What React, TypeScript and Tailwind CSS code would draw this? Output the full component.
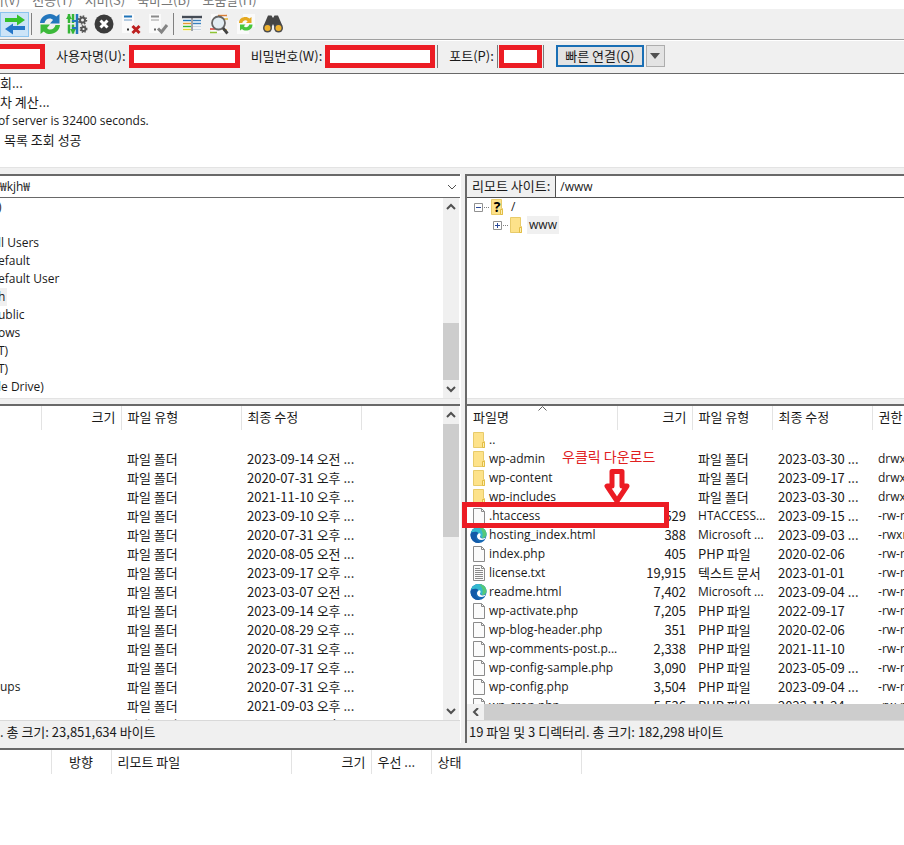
import type { ReactNode } from "react";

type FileKind = "folder" | "file" | "text" | "edge";

// latin only texts are set smaller than the korean ones
const latin = "font-['Open_Sans','Noto_Sans_CJK_KR',sans-serif] text-xs leading-[18px]";

const menus = ["기(V)", "전송(T)", "서버(S)", "북마크(B)", "도움말(H)"];

const localTree = [")", "", "ll Users", "efault", "efault User", "h", "ublic", "ows", "T)", "T)", "le Drive)"];

const localFiles = [
    { name: "", type: "", modified: "" },
    { name: "", type: "파일 폴더", modified: "2023-09-14 오전 ..." },
    { name: "", type: "파일 폴더", modified: "2020-07-31 오후 ..." },
    { name: "", type: "파일 폴더", modified: "2021-11-10 오후 ..." },
    { name: "", type: "파일 폴더", modified: "2023-09-10 오후 ..." },
    { name: "", type: "파일 폴더", modified: "2020-07-31 오후 ..." },
    { name: "", type: "파일 폴더", modified: "2020-08-05 오전 ..." },
    { name: "", type: "파일 폴더", modified: "2023-09-17 오후 ..." },
    { name: "", type: "파일 폴더", modified: "2023-03-07 오전 ..." },
    { name: "", type: "파일 폴더", modified: "2023-09-14 오후 ..." },
    { name: "", type: "파일 폴더", modified: "2020-08-29 오후 ..." },
    { name: "", type: "파일 폴더", modified: "2020-07-31 오후 ..." },
    { name: "", type: "파일 폴더", modified: "2023-09-17 오후 ..." },
    { name: "ups", type: "파일 폴더", modified: "2020-07-31 오후 ..." },
    { name: "", type: "파일 폴더", modified: "2021-09-03 오후 ..." },
    { name: "", type: "파일 폴더", modified: "2020-07-31 오후 ..." },
];

const remoteFiles: { kind: FileKind; name: string; size: string; type: string; modified: string; mode: string }[] = [
    { kind: "folder", name: "..", size: "", type: "", modified: "", mode: "" },
    { kind: "folder", name: "wp-admin", size: "", type: "파일 폴더", modified: "2023-03-30 ...", mode: "drwxr-xr-x" },
    { kind: "folder", name: "wp-content", size: "", type: "파일 폴더", modified: "2023-09-17 ...", mode: "drwxr-xr-x" },
    { kind: "folder", name: "wp-includes", size: "", type: "파일 폴더", modified: "2023-03-30 ...", mode: "drwxr-xr-x" },
    { kind: "file", name: ".htaccess", size: "529", type: "HTACCESS...", modified: "2023-09-15 ...", mode: "-rw-r--r--" },
    { kind: "edge", name: "hosting_index.html", size: "388", type: "Microsoft ...", modified: "2023-09-03 ...", mode: "-rwxr-xr-x" },
    { kind: "file", name: "index.php", size: "405", type: "PHP 파일", modified: "2020-02-06", mode: "-rw-r--r--" },
    { kind: "text", name: "license.txt", size: "19,915", type: "텍스트 문서", modified: "2023-01-01", mode: "-rw-r--r--" },
    { kind: "edge", name: "readme.html", size: "7,402", type: "Microsoft ...", modified: "2023-09-04 ...", mode: "-rw-r--r--" },
    { kind: "file", name: "wp-activate.php", size: "7,205", type: "PHP 파일", modified: "2022-09-17", mode: "-rw-r--r--" },
    { kind: "file", name: "wp-blog-header.php", size: "351", type: "PHP 파일", modified: "2020-02-06", mode: "-rw-r--r--" },
    { kind: "file", name: "wp-comments-post.p...", size: "2,338", type: "PHP 파일", modified: "2021-11-10", mode: "-rw-r--r--" },
    { kind: "file", name: "wp-config-sample.php", size: "3,090", type: "PHP 파일", modified: "2023-05-09 ...", mode: "-rw-r--r--" },
    { kind: "file", name: "wp-config.php", size: "3,504", type: "PHP 파일", modified: "2023-09-04 ...", mode: "-rw-r--r--" },
    { kind: "file", name: "wp-cron.php", size: "5,536", type: "PHP 파일", modified: "2022-11-24 ...", mode: "-rw-r--r--" },
];

function FileIcon({ kind }: { kind: FileKind }) {
    if (kind === "edge") {
        return (
            <svg className="-ml-px h-4 w-[17px] shrink-0" viewBox="0 0 17 16">
                <circle cx="8.500" cy="8" r="8" fill="#1668b4" />
                <path d="M1 5.500C2.200 2.300 5 0 8.500 0c4.500 0 8 3.200 8 7 0 2.600-2 4.200-4.500 4.200L9 8C8 5.500 5 4 1 5.500z" fill="#35b9cf" />
                <path d="M9 0c4.300.2 7.500 3.300 7.500 7 0 2.600-2 4.200-4.500 4.200C13.500 7.500 12.500 3 9 0z" fill="#55c878" />
                <path d="M.6 7C2.500 4.300 6.500 4.200 8.500 6c-1.700.6-2.800 2.200-2.800 4.200 0 2.300 1.500 4.600 4.500 5.600C5 16.800.2 13 .6 7z" fill="#1259a8" />
                <path d="M9.800 6.200c.8.600 1 1.600.5 2.500-.8 1.400.3 2.700 2.400 2.700 1.400 0 2.400-.5 3.200-1.100-.8 1.700-2.200 2.700-4.300 2.700-2.900 0-4.600-1.500-4.600-3.700 0-1.600 1.200-3 2.800-3.100z" fill="#fff" />
            </svg>
        );
    }
    if (kind === "folder") {
        return (
            <svg className="h-4 w-4 shrink-0" viewBox="0 0 16 16">
                <path d="M2.500.5h10v9h1v6h-11z" fill="#fde28a" stroke="#e8cb6a" />
                <path d="M11.500 15.500v-5h2v5z" fill="#fdeeb0" stroke="#e2bd45" />
            </svg>
        );
    }
    return (
        <svg className="h-4 w-4 shrink-0" viewBox="0 0 16 16">
            <path d="M2.500.5h8l3 3v12h-11z" fill="#fbfbfb" stroke="#8b8b8b" />
            <path d="M10.500.5v3h3" fill="none" stroke="#8b8b8b" />
            {kind === "text" && <path d="M4 3.500h5M4 5.500h8M4 7.500h8M4 9.500h8M4 11.500h8M4 13.500h8" stroke="#8a8a8a" />}
        </svg>
    );
}

function Chevron({ dir }: { dir: "up" | "down" | "left" }) {
    const d = { up: "M1 6l4-4 4 4", down: "M1 2l4 4 4-4", left: "M7 0L3 4l4 4" }[dir];
    return (
        <svg className="h-2 w-[10px]" viewBox="0 0 10 8">
            <path d={d} fill="none" stroke="#505050" strokeWidth="2" />
        </svg>
    );
}

// spacer and thumb take their share of the track between the two buttons
function ScrollBar({ before, thumb, after }: { before: string; thumb: string; after: string }) {
    return (
        <div className="flex w-4 shrink-0 flex-col bg-[#f0f0f0]">
            <button aria-label="위로" className="flex h-[18px] items-center justify-center"><Chevron dir="up" /></button>
            <div className={before}></div>
            <div className={`bg-[#cdcdcd] ${thumb}`}></div>
            <div className={after}></div>
            <button aria-label="아래로" className="flex h-[18px] items-center justify-center"><Chevron dir="down" /></button>
        </div>
    );
}

function ToolButton({ label, active, children }: { label: string; active?: boolean; children: ReactNode }) {
    return (
        <button
            aria-label={label}
            className={`flex h-[25px] shrink-0 items-center justify-center ${active ? "w-[29px] border border-[#8cc4ee] bg-[#cce4f7]" : "w-[27px]"}`}
        >
            <svg className="h-[22px] w-[22px] shrink-0" viewBox="0 0 22 22">{children}</svg>
        </button>
    );
}

function Separator() {
    return <div className="mx-[2px] h-[22px] w-px shrink-0 bg-[#808080]"></div>;
}

function Toolbar() {
    return (
        <div className="flex h-[31px] items-center border-b border-[#a0a0a0] bg-[#f0f0f0]">
            <ToolButton label="전송 대기열" active>
                <path d="M1 5h12V1.500L21 7l-8 5.500V9H1z" fill="#35c22c" />
                <path d="M21 13H9v-2.500L1 16l8 5.500V17h12z" fill="#2376c8" />
            </ToolButton>
            <Separator />
            <div className="w-[2px]"></div>
            <ToolButton label="새로고침">
                <path d="M1 10C1.500 4.500 6 1 11 1c2.600 0 4.700 1 6.300 2.600L20.500 1v9.500h-9.500l3-3.500c-1-1-1.800-1.500-3.200-1.500C8 5.500 6 7.300 5.500 10z" fill="#2376bd" />
                <path d="M21 12c-.5 5.500-5 9-10 9-2.600 0-4.700-1-6.300-2.600L1.500 21v-9.500H11L8 15c1 1 1.800 1.500 3.200 1.500 2.800 0 4.800-1.800 5.300-4.500z" fill="#3bb93a" />
            </ToolButton>
            <ToolButton label="대기열 처리">
                <path d="M3 1v20M7 1v20" stroke="#35b537" strokeWidth="2.500" strokeDasharray="9 1.500" />
                <path d="M0 6l3-5 3 5zM4 16l3 5 3-5z" fill="#35b537" />
                <path d="M11 1v20" stroke="#2376bd" strokeWidth="2.500" />
                <path d="M6 8h5M6 15h5" stroke="#2376bd" strokeWidth="2" />
                <circle cx="16.500" cy="7" r="2.500" fill="none" stroke="#555" strokeWidth="2" />
                <circle cx="16.500" cy="7" r="4" fill="none" stroke="#555" strokeWidth="1.500" strokeDasharray="1.600 1.500" />
                <circle cx="17.500" cy="16" r="2" fill="none" stroke="#555" strokeWidth="1.800" />
                <circle cx="17.500" cy="16" r="3.300" fill="none" stroke="#555" strokeWidth="1.300" strokeDasharray="1.400 1.300" />
            </ToolButton>
            <ToolButton label="취소">
                <circle cx="11" cy="11" r="9.500" fill="#3b3b3b" />
                <path d="M7.500 7.500l7 7M14.500 7.500l-7 7" stroke="#fff" strokeWidth="3" />
            </ToolButton>
            <ToolButton label="연결 끊기">
                <path d="M2 1h12v19H2z" fill="#fafafa" />
                <path d="M4 3.500h8" stroke="#1e73b8" strokeWidth="2" />
                <path d="M4 7h8" stroke="#9bbbd8" strokeWidth="1.500" />
                <path d="M7 16.500h2" stroke="#333" strokeWidth="2" />
                <path d="M12.500 13l7 7M19.500 13l-7 7" stroke="#bd2020" strokeWidth="3" />
            </ToolButton>
            <ToolButton label="다시 연결">
                <path d="M2 1h12v19H2z" fill="#fafafa" />
                <path d="M4 3.500h8" stroke="#8a8a8a" strokeWidth="2" />
                <path d="M4 7h8" stroke="#bbb" strokeWidth="1.500" />
                <path d="M7 16.500h2" stroke="#666" strokeWidth="2" />
                <path d="M11 15.500l3.500 3.500 5.500-7" fill="none" stroke="#848484" strokeWidth="3" />
            </ToolButton>
            <Separator />
            <div className="w-[2px]"></div>
            <ToolButton label="필터">
                <path d="M2 2h18v16H2z" fill="#fff" />
                <path d="M1 4h20" stroke="#444b55" strokeWidth="2.500" />
                <path d="M2 7.500h8" stroke="#2376bd" strokeWidth="1.500" />
                <path d="M2 10.500h8" stroke="#e39b33" strokeWidth="1.500" />
                <path d="M2 13.500h8" stroke="#35b537" strokeWidth="1.500" />
                <path d="M2 16.500h8" stroke="#e3d133" strokeWidth="1.500" />
                <path d="M12 7.500h8M12 10.500h8" stroke="#3a80bd" strokeWidth="1.500" />
                <path d="M12 13.500h8M12 16.500h8" stroke="#c9d4df" strokeWidth="1.500" />
                <path d="M11 3v15" stroke="#444b55" />
            </ToolButton>
            <ToolButton label="디렉터리 비교">
                <path d="M3 1h15v19H3z" fill="#fafafa" />
                <path d="M10 2.500h9" stroke="#d8803a" strokeWidth="1.500" />
                <path d="M16 6h4M15 17h4" stroke="#e3b533" strokeWidth="1.500" />
                <path d="M2 16h5" stroke="#d83a2e" strokeWidth="1.500" />
                <path d="M2 19.500h7" stroke="#8fc435" strokeWidth="1.500" />
                <circle cx="10.500" cy="10" r="6.500" fill="#e3edf3" stroke="#666" strokeWidth="1.800" />
                <path d="M15 15l4.500 5.500" stroke="#444" strokeWidth="2.800" />
            </ToolButton>
            <ToolButton label="동기화 탐색">
                <path d="M8 1h12v13H8zM2 8h12v13H2z" fill="#fafafa" />
                <path d="M4 10C4 6 7 4 10.500 4c1.700 0 3 .6 4 1.600L16.500 4v6H11l1.700-1.800C11 6.500 8 7 7.300 10z" fill="#e5a921" />
                <path d="M17.500 11.500c0 4-3 6-6.500 6-1.700 0-3-.6-4-1.600L5 17.500v-6h5.500l-1.700 1.800c1.700 1.700 4.700 1.200 5.400-1.800z" fill="#48c63d" />
            </ToolButton>
            <ToolButton label="찾기">
                <path d="M6 2.500h3.500L11 5l1.500-2.500H16L20.500 13 13 15l-2-4-2 4-7.500-2z" fill="#454545" />
                <circle cx="5.500" cy="15" r="4.500" fill="#4c4c4c" />
                <circle cx="16.500" cy="15" r="4.500" fill="#4c4c4c" />
                <circle cx="5.500" cy="15" r="3" fill="#efb22e" />
                <circle cx="16.500" cy="15" r="3" fill="#efb22e" />
            </ToolButton>
        </div>
    );
}

function QuickConnect() {
    return (
        <div className="flex h-[33px] items-center border-t border-white bg-[#f0f0f0] pb-[2px] whitespace-nowrap">
            <input aria-label="호스트" className="h-[25px] w-[45px] border-[5px] border-l-0 border-[#ec1c24] bg-white" />
            <label htmlFor="user" className="ml-[11px]">사용자명(U):</label>
            <input id="user" className="ml-[3px] h-[23px] w-[111px] border-[5px] border-[#ec1c24] bg-white" />
            <label htmlFor="password" className="ml-[11px]">비밀번호(W):</label>
            <div className="ml-[3px] border-r border-[#7a7a7a] pr-[2px]">
                <input id="password" type="password" className="block h-[23px] w-[110px] border-[5px] border-[#ec1c24] bg-white" />
            </div>
            <label htmlFor="port" className="ml-[11px]">포트(P):</label>
            <div className="ml-[3px] border-x border-[#7a7a7a] px-px">
                <input id="port" className="block h-[23px] w-[43px] border-[5px] border-[#ec1c24] bg-white" />
            </div>
            <button className="ml-3 h-[22px] w-[88px] border-2 border-[#1a6fb5] bg-[#e3e3e3] leading-4">빠른 연결(Q)</button>
            <button aria-label="연결 기록" className="ml-[2px] flex h-[22px] w-[19px] items-center justify-center border border-[#adadad] bg-[#e3e3e3]">
                <svg className="h-[6px] w-[10px]" viewBox="0 0 10 6"><path d="M0 0h10L5 6z" fill="#505050" /></svg>
            </button>
        </div>
    );
}

function LocalPane() {
    return (
        <section className="flex w-[51%] shrink-0 flex-col border-r border-white">
            <div className="flex h-6 items-center border-t-2 border-b border-t-[#696969] border-b-[#696969] bg-white">
                <input aria-label="로컬 사이트" defaultValue="₩kjh₩" className={`min-w-0 flex-1 bg-white outline-none ${latin}`} />
                <button aria-label="경로 목록" className="flex h-full w-4 items-center justify-center">
                    <svg className="h-[6px] w-[10px]" viewBox="0 0 10 6"><path d="M1 1l4 4 4-4" fill="none" stroke="#505050" /></svg>
                </button>
            </div>
            <div className="flex h-[201px] border-b border-[#e3e3e3] bg-white pr-px">
                <ul className={`-ml-[2px] min-w-0 flex-1 ${latin}`}>
                    {localTree.map((name, i) => (
                        <li key={i} className="flex h-[18px] items-center">
                            <span className={name === "h" ? "bg-[#f0f0f0] pr-[2px]" : ""}>{name}</span>
                        </li>
                    ))}
                </ul>
                <ScrollBar before="flex-[108]" thumb="flex-[57]" after="" />
            </div>
            <div className="h-[5px]"></div>
            <div className="flex h-[316px] overflow-hidden border-t-2 border-[#696969] bg-white pr-px">
                <div className="min-w-0 flex-1">
                    <table className="w-full table-fixed">
                        <thead>
                            <tr className="h-6">
                                <th className="w-[41px] border-r border-[#e3e3e3]"></th>
                                <th className="w-20 border-r border-[#e3e3e3] pr-[5px] pb-[2px] text-right font-normal">크기</th>
                                <th className="w-[120px] border-r border-[#e3e3e3] pb-[2px] pl-[6px] text-left font-normal">파일 유형</th>
                                <th className="w-[120px] border-r border-[#e3e3e3] pb-[2px] pl-[6px] text-left font-normal">최종 수정</th>
                                <th></th>
                            </tr>
                        </thead>
                        <tbody>
                            {localFiles.map((f, i) => (
                                <tr key={i} className="h-[19px]">
                                    <td className={latin}>{f.name}</td>
                                    <td></td>
                                    <td className="pl-[6px]">{f.type}</td>
                                    <td className="pl-[6px]">{f.modified}</td>
                                    <td></td>
                                </tr>
                            ))}
                        </tbody>
                    </table>
                </div>
                <ScrollBar before="" thumb="flex-[114]" after="flex-[166]" />
            </div>
            <div className="flex h-[23px] items-center border-t border-[#d9d9d9]">. 총 크기: 23,851,634 바이트</div>
        </section>
    );
}

function TreeToggle({ open }: { open?: boolean }) {
    return (
        <svg className="h-[9px] w-[15px] shrink-0" viewBox="0 0 15 9">
            <path d="M.5.5h8v8h-8z" fill="#fff" stroke="#919191" />
            <path d={open ? "M2 4.500h5" : "M2 4.500h5M4.500 2v5"} stroke="#2b4a9b" />
            <path d="M10 4.500h5" stroke="#808080" strokeDasharray="1 1" />
        </svg>
    );
}

function RemotePane() {
    return (
        <section className="ml-1 flex min-w-0 flex-1 flex-col border-l-2 border-[#696969]">
            <div className="flex h-6 items-stretch border-t-2 border-b border-t-[#696969] border-b-[#505050] bg-white whitespace-nowrap">
                <label htmlFor="remote" className="flex items-center border-r border-[#505050] bg-[#f0f0f0] px-[5px] pb-[2px]">리모트 사이트:</label>
                <input id="remote" defaultValue="/www" className={`min-w-0 flex-1 bg-white pl-1 outline-none ${latin}`} />
            </div>
            <div className={`h-[201px] border-b border-[#e3e3e3] bg-white ${latin}`}>
                <div className="flex h-[18px] items-center pl-[7px]">
                    <TreeToggle open />
                    <span className="relative">
                        <FileIcon kind="folder" />
                        <b className="absolute inset-0 text-center text-sm leading-4 text-black">?</b>
                    </span>
                    <span className="pl-[6px]">/</span>
                </div>
                <div className="flex h-[18px] items-center pl-[26px]">
                    <TreeToggle />
                    <FileIcon kind="folder" />
                    <span className="ml-[3px] bg-[#f0f0f0] px-[2px]">www</span>
                </div>
            </div>
            <div className="h-[5px]"></div>
            <div className="relative h-[300px] border-t-2 border-[#696969] bg-white">
                <div className="h-full overflow-hidden">
                    <table className="w-[505px] table-fixed whitespace-nowrap">
                        <thead>
                            <tr className="h-6">
                                <th className="relative w-[150px] border-r border-[#e3e3e3] pb-[2px] pl-[6px] text-left font-normal">
                                    파일명
                                    <svg className="absolute top-0 left-[71px] h-[5px] w-[9px]" viewBox="0 0 9 5"><path d="M.5 4.500l4-4 4 4" fill="none" stroke="#606060" /></svg>
                                </th>
                                <th className="w-[75px] border-r border-[#e3e3e3] pr-[5px] pb-[2px] text-right font-normal">크기</th>
                                <th className="w-20 border-r border-[#e3e3e3] pb-[2px] pl-[6px] text-left font-normal">파일 유형</th>
                                <th className="w-[100px] border-r border-[#e3e3e3] pb-[2px] pl-[6px] text-left font-normal">최종 수정</th>
                                <th className="w-[100px] pb-[2px] pl-[6px] text-left font-normal">권한</th>
                            </tr>
                        </thead>
                        <tbody>
                            {remoteFiles.map((f) => (
                                <tr key={f.name} className="h-[19px]">
                                    <td className={`pl-1 ${latin}`}>
                                        <div className="flex items-center gap-[2px]"><FileIcon kind={f.kind} />{f.name}</div>
                                    </td>
                                    <td className="pr-[6px] text-right">{f.size}</td>
                                    <td className={f.type.endsWith("...") ? `pl-[6px] ${latin}` : "pl-[6px]"}>{f.type}</td>
                                    <td className="pl-[6px]">{f.modified}</td>
                                    <td className={`pl-[6px] ${latin}`}>{f.mode}</td>
                                </tr>
                            ))}
                        </tbody>
                    </table>
                </div>
                {/* callout over the .htaccess row */}
                <div className="absolute top-[41px] left-[95px] text-sm leading-[18px] text-[#e0201f]">우클릭 다운로드</div>
                <svg className="absolute top-[63px] left-[137px] h-[35px] w-[26px]" viewBox="0 0 26 35">
                    <path d="M8 2.500h10V17h5L13 32 3 17h5z" fill="#fff" stroke="#ec1c24" strokeWidth="5" strokeLinejoin="round" />
                </svg>
                <div className="absolute top-24 -left-[5px] h-[26px] w-[207px] border-[5px] border-[#ec1c24]"></div>
            </div>
            <div className="flex h-4 bg-[#cdcdcd]">
                <button aria-label="왼쪽으로" className="flex w-[17px] items-center justify-center bg-[#f0f0f0]"><Chevron dir="left" /></button>
            </div>
            <div className="flex h-[23px] items-center border-t border-[#d9d9d9] pl-[2px]">19 파일 및 3 디렉터리. 총 크기: 182,298 바이트</div>
        </section>
    );
}

function Queue() {
    return (
        <div className="flex-1 border-t-2 border-[#696969] bg-white">
            <table className="w-full table-fixed">
                <thead>
                    <tr className="h-6">
                        <th className="w-[51px] border-r border-[#e3e3e3]"></th>
                        <th className="w-[60px] border-r border-[#e3e3e3] font-normal">방향</th>
                        <th className="w-[180px] border-r border-[#e3e3e3] pl-[6px] text-left font-normal">리모트 파일</th>
                        <th className="w-20 border-r border-[#e3e3e3] pr-[5px] text-right font-normal">크기</th>
                        <th className="w-[60px] border-r border-[#e3e3e3] pl-[6px] text-left font-normal">우선 ...</th>
                        <th className="w-[150px] border-r border-[#e3e3e3] pl-[6px] text-left font-normal">상태</th>
                        <th></th>
                    </tr>
                </thead>
            </table>
        </div>
    );
}

export default function App() {
    return (
        <div className="flex min-h-screen flex-col overflow-hidden bg-[#f0f0f0] font-['Noto_Sans_CJK_KR',sans-serif] text-[13px] leading-[18px] text-[#1a1a1a]">
            <nav className="-ml-2 flex h-[9px] items-end gap-3 overflow-hidden bg-white text-[#777777]">
                {menus.map((m) => <a key={m} href="#" className="shrink-0">{m}</a>)}
            </nav>
            <Toolbar />
            <QuickConnect />
            <div className="h-[95px] border-t border-b border-t-[#696969] border-b-[#e3e3e3] bg-white">
                <p className="h-[19px]">회...</p>
                <p className="h-[19px]">차 계산...</p>
                <p className={`-ml-[2px] h-[19px] ${latin}`}>of server is 32400 seconds.</p>
                <p className="ml-1 h-[19px]">목록 조회 성공</p>
            </div>
            <div className="h-[6px]"></div>
            <div className="flex">
                <LocalPane />
                <RemotePane />
            </div>
            <div className="h-[5px]"></div>
            <Queue />
        </div>
    );
}
